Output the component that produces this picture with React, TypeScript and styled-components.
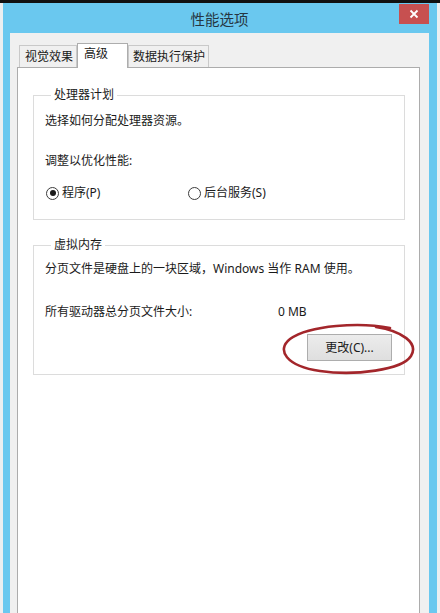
import React from "react";
import styled, { createGlobalStyle } from "styled-components";

const Global = createGlobalStyle`
  html, body { margin: 0; padding: 0; overflow: hidden; }
  body { font-family: "Noto Sans", "Noto Sans CJK SC", sans-serif; }
  * { box-sizing: border-box; }
`;

const Page = styled.div`
  width: 440px;
  height: 613px;
  background: #eceff1;
  border-top: 3px solid #111;
  display: flex;
  padding-left: 3px;
  font-family: "Noto Sans", "Noto Sans CJK SC", sans-serif;
  font-size: 12px;
  color: #1a1a1a;
`;

const Window = styled.div`
  width: 434px;
  height: 610px;
  background: #6ac8ef;
  display: flex;
  flex-direction: column;
  padding: 0 8px 0 7px;
`;

const TitleBar = styled.div`
  height: 30px;
  display: grid;
  grid-template-columns: 1fr auto 1fr;
  margin: 0 0 0 -7px;
  padding-left: 7px;
`;

const Title = styled.div`
  grid-column: 2;
  font-size: 14.5px;
  line-height: 30px;
  color: #263642;
  padding-top: 1px;
`;

const CloseBtn = styled.div`
  grid-column: 3;
  justify-self: end;
  width: 30px;
  height: 20px;
  margin-top: 1px;
  background: #c75050;
  display: flex;
  align-items: center;
  justify-content: center;
`;

const Client = styled.div`
  flex: 1;
  background: #f0f0f0;
  display: flex;
  flex-direction: column;
  padding: 10px 9px 0 7px;
`;

const TabStrip = styled.div`
  display: flex;
  align-items: flex-end;
  padding-left: 2px;
  height: 24px;
  position: relative;
  z-index: 1;
`;

const Tab = styled.div<{ $w: number; $active?: boolean; $pl: number }>`
  width: ${(p) => p.$w}px;
  height: ${(p) => (p.$active ? 25 : 22)}px;
  margin-bottom: ${(p) => (p.$active ? -1 : 0)}px;
  background: ${(p) => (p.$active ? "#ffffff" : "#f0f0f0")};
  border: 1px solid ${(p) => (p.$active ? "#adadad" : "#c9c9c9")};
  border-bottom: none;
  padding-left: ${(p) => p.$pl}px;
  line-height: ${(p) => (p.$active ? 20 : 21)}px;
  font-size: 12px;
  color: #1a1a1a;
  white-space: nowrap;
`;

const Panel = styled.div`
  flex: 1;
  background: #fff;
  border: 1px solid #acacac;
  border-bottom: none;
  padding: 19px 14px 0 15px;
  display: flex;
  flex-direction: column;
`;

const Group = styled.fieldset<{ $pt: number; $pb: number }>`
  margin: 0;
  border: 1px solid #dcdcdc;
  padding: ${(p) => p.$pt}px 12px ${(p) => p.$pb}px 11px;
  min-width: 0;
  & + & { margin-top: 17px; }
`;

const Legend = styled.legend`
  margin-left: 6px;
  padding: 0 3px;
  line-height: 16px;
  font-size: 12px;
  color: #1a1a1a;
`;

const Line = styled.div<{ $mt?: number }>`
  line-height: 16px;
  margin-top: ${(p) => p.$mt ?? 0}px;
  white-space: nowrap;
`;

const RadioRow = styled.div`
  display: flex;
  margin-top: 16px;
  height: 16px;
  align-items: center;
`;

const RadioOption = styled.label<{ $w?: number }>`
  display: flex;
  align-items: center;
  gap: 3px;
  width: ${(p) => (p.$w ? `${p.$w}px` : "auto")};
  line-height: 16px;
`;

const RadioCircle = styled.span<{ $checked?: boolean }>`
  width: 13px;
  height: 13px;
  margin-left: ${(p) => (p.$checked ? 1 : 0)}px;
  border-radius: 50%;
  border: 1px solid #3c3c3c;
  background: #fff;
  display: flex;
  align-items: center;
  justify-content: center;
  &::after {
    content: "";
    width: 6px;
    height: 6px;
    border-radius: 50%;
    background: ${(p) => (p.$checked ? "#1a1a1a" : "transparent")};
  }
`;

const SizeRow = styled.div`
  display: flex;
  line-height: 16px;
  margin-top: 27px;
`;

const SizeLabel = styled.span`
  width: 233px;
`;

const ButtonRow = styled.div`
  display: flex;
  justify-content: flex-end;
  margin-top: 14px;
`;

const ButtonWrap = styled.div`
  position: relative;
`;

const Button = styled.button`
  width: 85px;
  height: 27px;
  border: 1px solid #adadad;
  background: linear-gradient(#ececec, #dfdfdf);
  font-family: inherit;
  font-size: 12px;
  color: #1a1a1a;
  padding: 0;
  line-height: 25px;
`;

const Ellipse = styled.svg`
  position: absolute;
  left: -27px;
  top: -11px;
  pointer-events: none;
`;

export default function App() {
  return (
    <>
      <Global />
      <Page>
        <Window>
          <TitleBar>
            <Title>性能选项</Title>
            <CloseBtn>
              <svg width="10" height="10" viewBox="0 0 10 10">
                <path d="M1.5 1.5 L8.5 8.5 M8.5 1.5 L1.5 8.5" stroke="#fff" strokeWidth="1.8" />
              </svg>
            </CloseBtn>
          </TitleBar>
          <Client>
            <TabStrip>
              <Tab $w={58} $pl={5}>视觉效果</Tab>
              <Tab $w={51} $pl={6} $active>高级</Tab>
              <Tab $w={81} $pl={4}>数据执行保护</Tab>
            </TabStrip>
            <Panel>
              <Group $pt={10} $pb={18}>
                <Legend>处理器计划</Legend>
                <Line>选择如何分配处理器资源。</Line>
                <Line $mt={24}>调整以优化性能:</Line>
                <RadioRow>
                  <RadioOption $w={143}>
                    <RadioCircle $checked />
                    程序(P)
                  </RadioOption>
                  <RadioOption>
                    <RadioCircle />
                    后台服务(S)
                  </RadioOption>
                </RadioRow>
              </Group>
              <Group $pt={8} $pb={13}>
                <Legend>虚拟内存</Legend>
                <Line>分页文件是硬盘上的一块区域，Windows 当作 RAM 使用。</Line>
                <SizeRow>
                  <SizeLabel>所有驱动器总分页文件大小:</SizeLabel>
                  <span>0 MB</span>
                </SizeRow>
                <ButtonRow>
                  <ButtonWrap>
                    <Button>更改(C)...</Button>
                    <Ellipse width="140" height="52" viewBox="0 0 140 52">
                      <path
                        d="M110 5 C 80 -1, 30 2, 10 16 C -4 27, 6 43, 40 48 C 75 53, 122 47, 131 33 C 139 20, 122 8, 96 4"
                        fill="none"
                        stroke="#a3262b"
                        strokeWidth="2.6"
                        strokeLinecap="round"
                      />
                    </Ellipse>
                  </ButtonWrap>
                </ButtonRow>
              </Group>
            </Panel>
          </Client>
        </Window>
      </Page>
    </>
  );
}
